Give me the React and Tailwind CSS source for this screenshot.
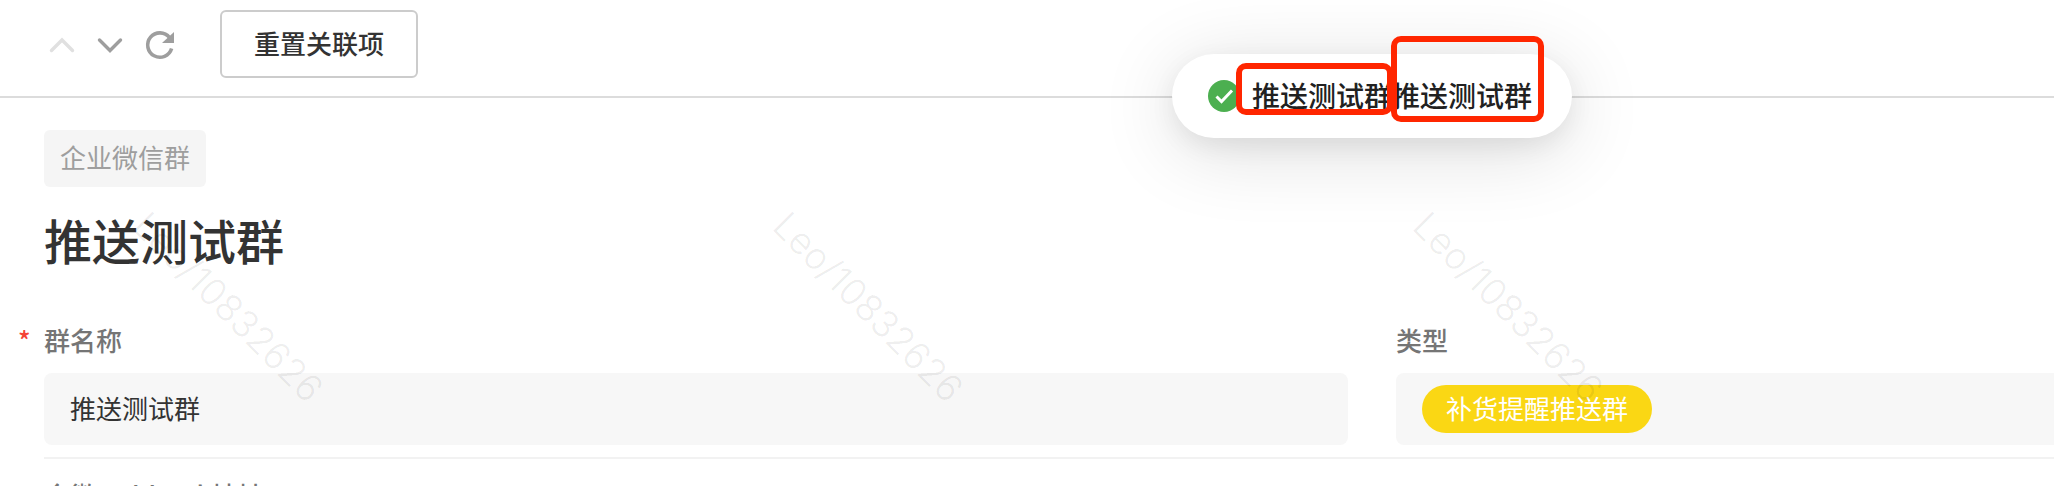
import React from 'react';
import clsx from 'clsx';

const watermarks = [
  { id: 'wm-1', position: 'left-[154px]' },
  { id: 'wm-2', position: 'left-[794px]' },
  { id: 'wm-3', position: 'left-[1434px]' },
];

function Toolbar() {
  return (
    <header className="flex h-[98px] items-start border-b-2 border-[#dcdcdc] pt-[10px] pl-[44px]">
      <div className="flex h-[68px] items-center gap-[12px]">
        <button type="button" aria-label="上一条" disabled className="text-[#e0e0e0]">
          <svg className="size-9" viewBox="0 0 36 36" fill="none" stroke="currentColor" strokeWidth="3.4" strokeLinecap="round">
            <path d="M7.5 24.5 L18 14 L28.5 24.5" />
          </svg>
        </button>
        <button type="button" aria-label="下一条" className="text-[#9e9e9e]">
          <svg className="size-9" viewBox="0 0 36 36" fill="none" stroke="currentColor" strokeWidth="3.4" strokeLinecap="round">
            <path d="M7.5 14 L18 24.5 L28.5 14" />
          </svg>
        </button>
        <button type="button" aria-label="刷新" className="text-[#9e9e9e]">
          <svg className="size-9" viewBox="0 0 36 36">
            <path d="M29.5 11.5 A12.2 12.2 0 1 0 31.6 22.5" fill="none" stroke="currentColor" strokeWidth="3.6" />
            <path d="M34 6 V17 H22 Z" fill="currentColor" />
          </svg>
        </button>
      </div>
      <button type="button" className="ml-[44px] flex h-[68px] items-start rounded-[6px] border-2 border-[#cccccc] bg-white px-[32px] pt-[13px] text-[26px] leading-[36px] font-medium text-[#333333]">
        重置关联项
      </button>
    </header>
  );
}

function Toast() {
  return (
    <div role="status" className="absolute top-[54px] left-[1172px] flex h-[84px] items-center gap-[12px] rounded-full bg-white pr-[40px] pl-[36px] text-[28px] font-medium whitespace-nowrap text-[#212121] shadow-[0_12px_80px_rgba(0,0,0,0.14),0_8px_24px_rgba(0,0,0,0.07)]">
      <svg className="size-8" viewBox="0 0 32 32">
        <circle cx="16" cy="16" r="16" fill="#4caf50" />
        <path d="M8.5 16.5 L13.5 21.5 L24 10.5" fill="none" stroke="#fff" strokeWidth="3" />
      </svg>
      <span className="pb-[2px]">推送测试群推送测试群</span>
      <span className="absolute top-[9px] left-[64px] h-[52px] w-[157px] rounded-[10px] border-6 border-[#ff2600]" />
      <span className="absolute top-[-18px] left-[219px] h-[86px] w-[153px] rounded-[10px] border-6 border-[#ff2600]" />
    </div>
  );
}

function Watermark({ position }) {
  return (
    <span aria-hidden="true" className={clsx('pointer-events-none absolute top-[205px] origin-top-left rotate-45 font-[Inter] text-[37px] leading-[40px] font-light whitespace-nowrap text-black/8', position)}>
      Leo/10832626
    </span>
  );
}

function App() {
  return (
    <div className="relative h-screen overflow-hidden bg-white font-['Noto_Sans_CJK_SC',sans-serif] text-[#333333]">
      <Toolbar />
      <main className="pt-[32px] pl-[44px]">
        <span className="flex h-[57px] w-fit items-center rounded-[6px] bg-[#f5f5f5] px-[16px] pb-[4px] text-[26px] text-[#9e9e9e]">
          企业微信群
        </span>
        <h1 className="mt-[16px] text-[48px] leading-[72px] font-medium">推送测试群</h1>
        <div className="mt-[47px] grid grid-cols-[1304fr_658fr] gap-x-[48px]">
          <div>
            <label htmlFor="group-name" className="relative block text-[26px] leading-[36px] font-medium text-[#757575]">
              <span className="absolute left-[-26px] text-[#f44336]">*</span>
              群名称
            </label>
            <input id="group-name" readOnly defaultValue="推送测试群" className="mt-[15px] block h-[72px] w-full rounded-[8px] bg-[#f7f7f7] px-[26px] pb-[4px] text-[26px] outline-none" />
          </div>
          <div>
            <div className="text-[26px] leading-[36px] font-medium text-[#757575]">类型</div>
            <div className="mt-[15px] flex h-[72px] items-center rounded-l-[8px] bg-[#f7f7f7] px-[26px]">
              <span className="flex h-[48px] items-center rounded-full bg-[#fad714] px-[24px] pb-[4px] text-[26px] text-white">补货提醒推送群</span>
            </div>
          </div>
        </div>
        <div className="mt-[12px] border-t-2 border-[#f2f2f2] pt-[18px]">
          <div className="text-[26px] leading-[36px] font-medium text-[#757575]">企微webhook地址</div>
        </div>
      </main>
      {watermarks.map((mark) => (
        <Watermark key={mark.id} position={mark.position} />
      ))}
      <Toast />
    </div>
  );
}

export default App;
